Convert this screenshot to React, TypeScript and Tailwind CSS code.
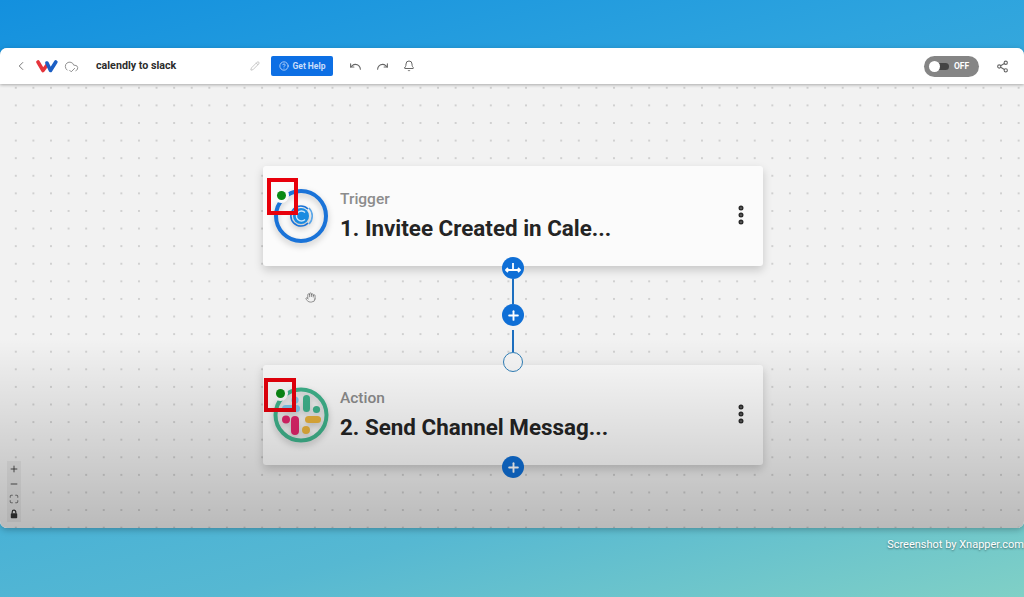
import React from "react";
import {
  Bell,
  ChevronLeft,
  CircleHelp,
  CloudCheck,
  Hand,
  Maximize,
  Minus,
  MoreVertical,
  Pencil,
  Plus,
  Redo,
  Share2,
  Undo,
} from "lucide-react";

const Logo = () => (
  <svg width="22" height="14" viewBox="0 0 22 14" fill="none">
    <path d="M2 3 L7 11.5 L11 6" stroke="#e5343b" strokeWidth="3.6" strokeLinecap="round" strokeLinejoin="round" />
    <path d="M11 4 L14.5 11.5 L19.8 3" stroke="#1c5fc4" strokeWidth="3.6" strokeLinecap="round" strokeLinejoin="round" />
  </svg>
);

const CalendlyIcon = () => (
  <svg width="56" height="56" viewBox="0 0 56 56" fill="none">
    <circle cx="28" cy="28" r="25" stroke="#1a73d8" strokeWidth="4" />
    <circle cx="28" cy="28" r="8" fill="#1a8be0" />
    <path d="M35 21 A10 10 0 1 0 35 35" stroke="#1a73d8" strokeWidth="1.6" />
    <path d="M36 20 A11.5 11.5 0 0 1 36 36" stroke="#5aa6e8" strokeWidth="1.6" />
    <path d="M32 24.5 A5 5 0 1 0 32 31.5" stroke="#cfe6fa" strokeWidth="1.4" />
  </svg>
);

const SlackIcon = () => (
  <svg width="56" height="56" viewBox="0 0 56 56" fill="none">
    <circle cx="28" cy="28" r="25.5" stroke="#3fb28b" strokeWidth="4" />
    <rect x="30" y="8" width="7" height="17" rx="3.5" fill="#3fb28b" />
    <circle cx="43.5" cy="22.5" r="3.6" fill="#3fb28b" />
    <rect x="32" y="29" width="16" height="7" rx="3.5" fill="#e8b23c" />
    <circle cx="33" cy="43" r="4" fill="#e8b23c" />
    <rect x="18" y="29" width="8" height="19" rx="4" fill="#e0246a" />
    <circle cx="13" cy="32.5" r="4" fill="#e0246a" />
    <rect x="9" y="18" width="18" height="7" rx="3.5" fill="#7cc8ea" />
    <circle cx="22" cy="13" r="3.6" fill="#7cc8ea" />
  </svg>
);

const LockIcon = () => (
  <svg width="10" height="10" viewBox="0 0 10 10" fill="none">
    <path d="M3.2 4.5V3a1.8 1.8 0 0 1 3.6 0v1.5" stroke="currentColor" strokeWidth="1.2" />
    <rect x="1.8" y="4.3" width="6.4" height="5" rx="0.8" fill="currentColor" />
  </svg>
);

const PlusButton = () => (
  <div className="z-10 flex h-[22px] w-[22px] items-center justify-center rounded-full bg-[#0f6fd6]">
    <Plus size={15} strokeWidth={3} className="text-white" />
  </div>
);

const Marker = ({ className, dot }: { className: string; dot: string }) => (
  <div className={`absolute z-20 border-[4px] border-[#e8000b] ${className}`}>
    <span className={`absolute h-[9px] w-[9px] rounded-full bg-[#0a8a14] shadow-[0_0_0_3px_#fbfbfb] ${dot}`} />
  </div>
);

const StepCard = ({
  icon,
  label,
  title,
  marker,
  dot,
}: {
  icon: React.ReactNode;
  label: string;
  title: string;
  marker: string;
  dot: string;
}) => (
  <div className="relative flex h-[100px] w-[500px] items-center rounded-[3px] bg-[#fbfbfb] pl-[10px] pr-[10px] shadow-[0_4px_10px_rgba(0,0,0,0.18)]">
    <Marker className={marker} dot={dot} />
    <div className="h-14 w-14 drop-shadow-[0_3px_3px_rgba(0,0,0,0.22)]">{icon}</div>
    <div className="ml-[11px] flex-1 pb-[2px]">
      <div className="text-[15.5px] leading-[20px] font-medium text-[#8c8c8c]">{label}</div>
      <div className="mt-[6px] text-[22.4px] leading-[27px] font-bold text-[#242424]">{title}</div>
    </div>
    <MoreVertical size={24} strokeWidth={3} className="-mt-[2px] text-[#2b2b2b]" />
  </div>
);

const App = () => {
  return (
    <div className="relative flex h-[597px] w-[1024px] flex-col overflow-hidden bg-[linear-gradient(165deg,#1390de_0%,#2ea4de_30%,#56b8d2_75%,#80d0c6_100%)] pb-[69px] pt-[48px] font-['Roboto',sans-serif]">
      <div className="flex flex-1 flex-col overflow-hidden rounded-[7px] bg-white shadow-[0_2px_6px_rgba(0,0,0,0.25)]">
        {/* top bar */}
        <header className="z-10 flex h-[36px] items-center bg-white pl-[14px] pr-[15px] shadow-[0_1px_3px_rgba(0,0,0,0.3)]">
          <ChevronLeft size={14} strokeWidth={1.5} className="text-[#666]" />
          <div className="ml-[8px]">
            <Logo />
          </div>
          <CloudCheck size={15} strokeWidth={1.5} className="ml-[6px] text-[#8a8a8a]" />
          <span className="ml-[17px] w-[154px] text-[10.7px] font-bold text-[#2c2c2c]">calendly to slack</span>
          <Pencil size={10} className="text-[#bdbdbd]" />
          <button className="ml-[11px] flex h-[20px] w-[62px] items-center justify-center gap-[4px] rounded-[2px] bg-[#0d6fe4] text-[8.5px] font-bold text-[#c9defa]">
            <CircleHelp size={10} strokeWidth={2} />
            Get Help
          </button>
          <Undo size={13} className="ml-[16px] text-[#666]" />
          <Redo size={13} className="ml-[14px] text-[#666]" />
          <Bell size={12} className="ml-[14px] text-[#666]" />
          <div className="ml-auto flex h-[21px] w-[55px] items-center rounded-full bg-[#858585] pl-[5px]">
            <span className="z-10 h-[11px] w-[11px] rounded-full bg-white" />
            <span className="-ml-[2px] h-[7px] w-[11px] rounded-r-full bg-[#444]" />
            <span className="ml-[5px] text-[8.5px] font-bold text-white">OFF</span>
          </div>
          <Share2 size={13} className="ml-[17px] text-[#666]" />
        </header>

        {/* canvas */}
        <main className="relative flex flex-1 flex-col items-center bg-[#f2f2f2] bg-[radial-gradient(circle,#d0d0d0_0.8px,transparent_1.2px)] bg-[length:17.6px_17.6px] bg-[position:7px_-5px] pl-[2px] pt-[82px]">
          <StepCard
            icon={<CalendlyIcon />}
            label="Trigger"
            title="1. Invitee Created in Cale..."
            marker="left-[4px] top-[12px] h-[37px] w-[31px]"
            dot="left-[6px] top-[9px]"
          />

          <div className="z-10 -mt-[9px] -mb-[7px] flex flex-col items-center">
            <div className="flex h-[22px] w-[22px] items-center justify-center rounded-full bg-[#0f6fd6]">
              <svg width="16" height="12" viewBox="0 0 16 12" fill="none" stroke="#fff" strokeWidth="1.8">
                <path d="M8 1v7M1 8h14M3 6l-2 2 2 2M13 6l2 2-2 2" />
              </svg>
            </div>
            <div className="h-[25px] w-[2px] bg-[#1c6fc0]" />
            <PlusButton />
            <div className="mt-[4px] h-[22px] w-[2px] bg-[#1c6fc0]" />
            <div className="h-[20px] w-[20px] rounded-full border-[1.5px] border-[#2f7fb8] bg-[#f6f6f6]" />
          </div>

          <StepCard
            icon={<SlackIcon />}
            label="Action"
            title="2. Send Channel Messag..."
            marker="left-[1px] top-[13px] h-[34px] w-[32px]"
            dot="left-[8px] top-[7px]"
          />
          <div className="z-10 -mt-[9px]">
            <PlusButton />
          </div>

          <Hand size={11} strokeWidth={1.5} className="absolute left-[305px] top-[208px] text-[#666]" />

          {/* zoom controls */}
          <div className="absolute bottom-[6px] left-[7px] z-10 flex w-[14px] flex-col items-center gap-[5px] bg-[#e6e6e6] py-[3px] text-[#333]">
            <Plus size={10} strokeWidth={2} />
            <Minus size={10} strokeWidth={2} />
            <Maximize size={10} strokeWidth={1.5} />
            <LockIcon />
          </div>

          {/* the picture fades darker toward the bottom */}
          <div className="pointer-events-none absolute inset-x-0 bottom-0 z-30 h-[190px] bg-gradient-to-b from-transparent to-black/[0.23]" />
        </main>
      </div>

      <span className="absolute right-0 top-[537px] text-[11px] text-white [text-shadow:0_1px_2px_rgba(0,0,0,0.5)]">
        Screenshot by Xnapper.com
      </span>
    </div>
  );
};

export default App;
